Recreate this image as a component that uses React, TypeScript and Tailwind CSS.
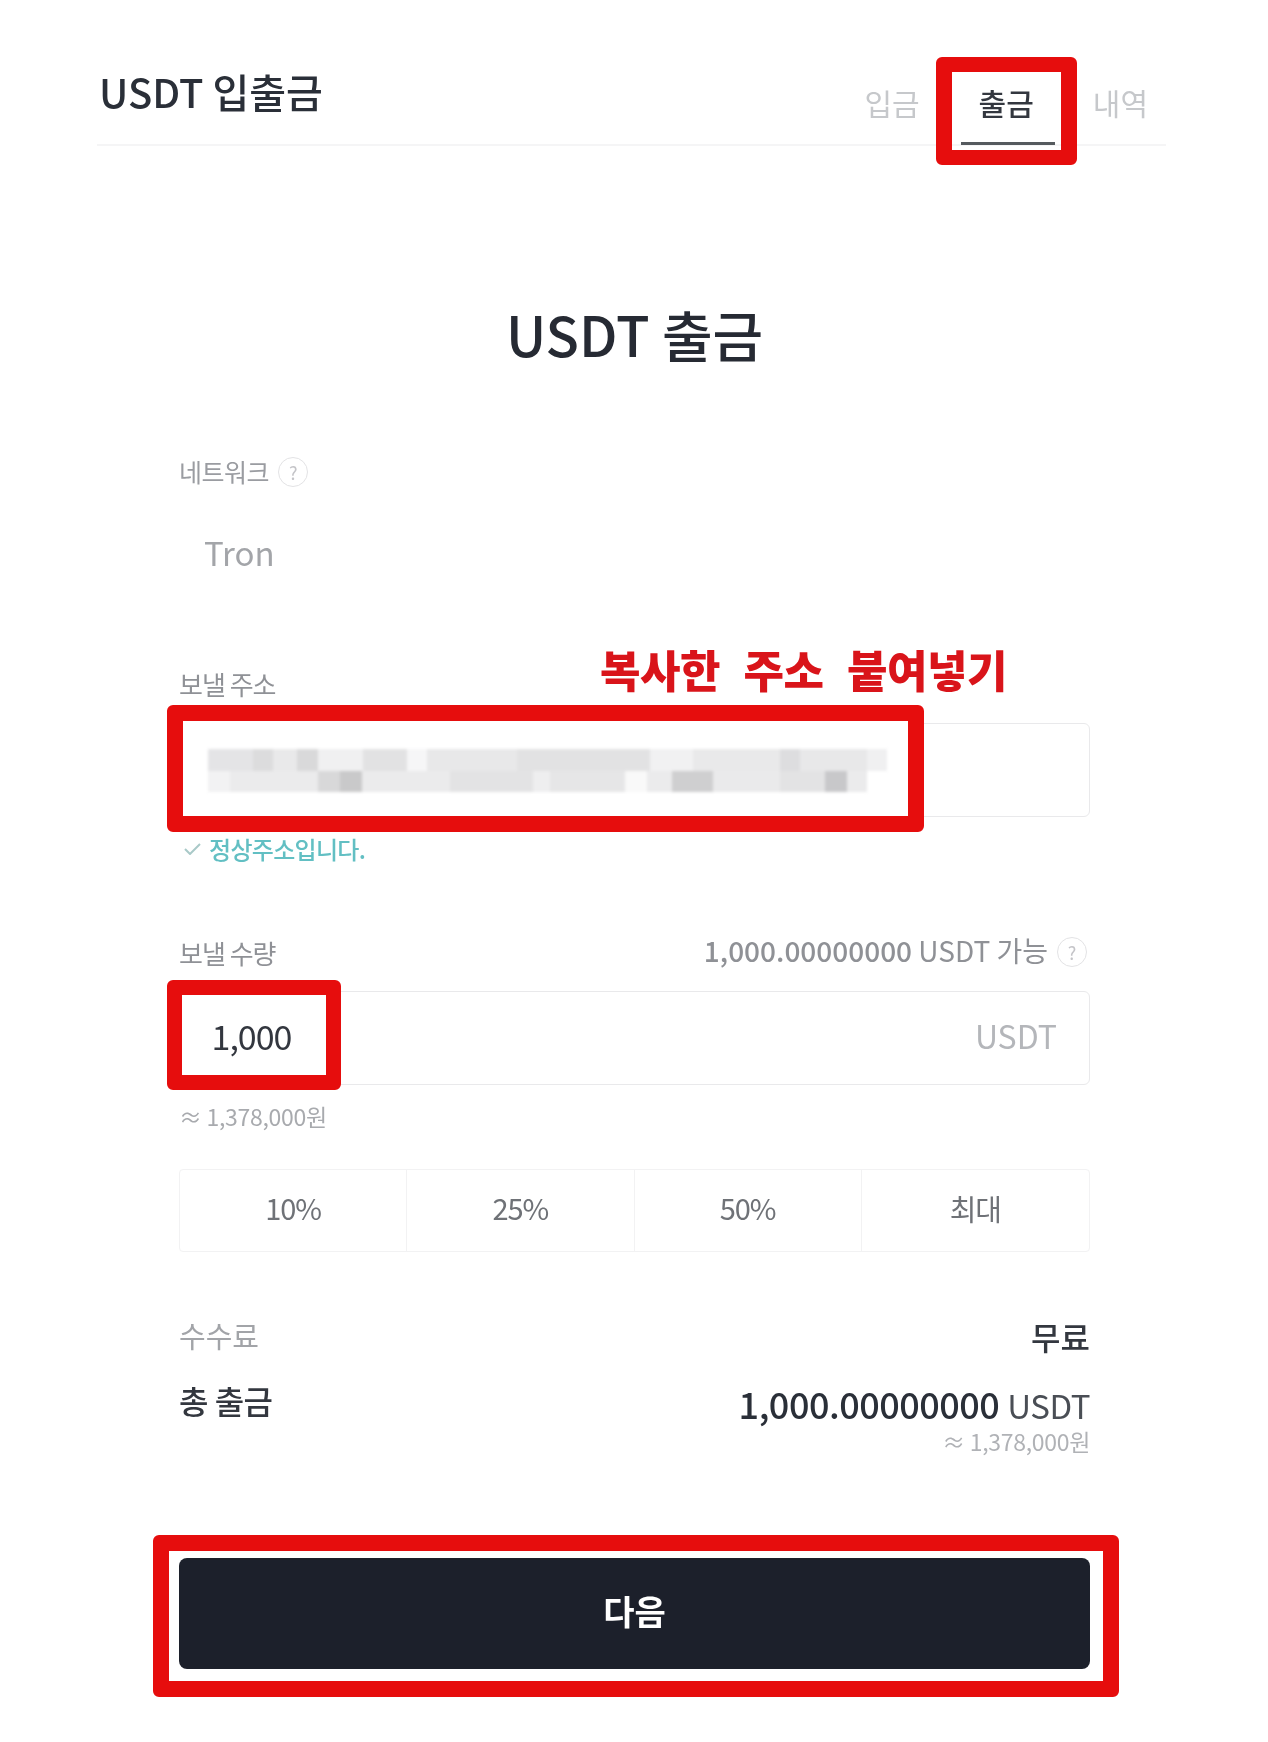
import React from 'react';

const font = { fontFamily: '"Noto Sans CJK KR", "Noto Sans", sans-serif' };

// mosaic of the hidden address: [x, width, colour], two rows
const mosaicTop: [number, number, string][] = [
  [208, 45, '#e4e4e6'], [253, 20, '#dcdcdd'], [273, 24, '#e9e9ea'], [297, 21, '#d9d9da'],
  [318, 45, '#f0f0f1'], [363, 44, '#e2e2e3'], [407, 20, '#f6f6f7'], [427, 90, '#e8e8e9'],
  [517, 133, '#e2e2e3'], [650, 43, '#f1f1f2'], [693, 87, '#e9e9ea'], [780, 20, '#dddddf'],
  [800, 67, '#e8e8e9'], [867, 20, '#f0f0f1'],
];
const mosaicBottom: [number, number, string][] = [
  [208, 22, '#f2f2f3'], [230, 88, '#ebebec'], [318, 22, '#d8d8d9'], [340, 22, '#c9c9ca'],
  [362, 88, '#ebebec'], [450, 83, '#e3e3e4'], [533, 17, '#eeeeef'], [550, 75, '#e6e6e7'],
  [625, 22, '#f9f9f9'], [647, 25, '#ebebec'], [672, 41, '#cfcfd0'], [713, 67, '#eaeaeb'],
  [780, 45, '#e3e3e4'], [825, 22, '#c8c8ca'], [847, 20, '#ebebec'],
];

function Help({ className }: { className: string }) {
  return (
    <span className={`flex h-[30px] w-[30px] items-center justify-center rounded-full border border-[#e3e3e5] text-[18px] text-[#c4c4c8] ${className}`}>
      ?
    </span>
  );
}

export default function App() {
  return (
    <div style={font} className="relative min-h-[1742px] w-[1268px] overflow-hidden bg-white blur-[0.7px]">
      <div className="ml-[97px] w-[1069px]">
        {/* Header */}
        <div className="flex h-[146px] items-start justify-between border-b-2 border-[#f5f5f6]">
          <h1 className="mt-[69px] ml-[2px] text-[40px] leading-[44px] font-medium text-[#2a2f38]">USDT 입출금</h1>
          <div className="mt-[85px] mr-[18px] flex gap-[59px] text-[30px] leading-[34px] text-[#c6c8cb]">
            <span>입금</span>
            <span className="font-medium text-[#33373f]">출금</span>
            <span>내역</span>
          </div>
        </div>

        <div className="ml-[82px] w-[911px]">
          <h2 className="mt-[162px] text-center text-[55px] leading-[50px] font-medium text-[#262a33]">USDT 출금</h2>

          <div className="mt-[99px] flex h-[30px] items-center gap-[9px] text-[25px] tracking-[-0.5px] text-[#9a9ca1]">
            <span>네트워크</span>
            <Help className="" />
          </div>
          <div className="mt-[50px] ml-[25px] h-[30px] text-[33px] leading-[30px] text-[#a3a5a9]">Tron</div>

          <div className="mt-[105px] h-[24px] text-[26px] leading-[24px] tracking-[-1px] text-[#8f9196]">보낼 주소</div>
          <div className="mt-[27px] h-[94px] rounded-[6px] border border-[#e9e9eb]" />
          <div className="mt-[22px] flex h-[20px] items-center gap-[8px] pl-[5px] text-[24px] leading-[20px] tracking-[-0.7px] text-[#62bfc3]">
            <svg width="17" height="12" viewBox="0 0 17 12" fill="none" stroke="#a9c9c8" strokeWidth="2">
              <path d="M1 6l5 5L16 1" />
            </svg>
            <span className="font-medium">정상주소입니다.</span>
          </div>

          <div className="mt-[78px] flex h-[30px] items-center justify-between text-[#8f9196]">
            <span className="text-[26px] tracking-[-1px]">보낼 수량</span>
            <div className="flex items-center gap-[9px] text-[28px]">
              <span className="-mt-[4px]">
                <span className="font-medium">1,000.00000000</span> USDT 가능
              </span>
              <Help className="mr-[3px]" />
            </div>
          </div>
          <div className="mt-[24px] flex h-[94px] items-center justify-end rounded-[6px] border border-[#e9e9eb] pr-[32px] text-[32px] text-[#b4b6ba]">
            <span className="-mt-[6px]">USDT</span>
          </div>
          <div className="mt-[20px] h-[22px] text-[23px] leading-[22px] tracking-[-0.3px] text-[#a8aaae]">≈ 1,378,000원</div>

          <div className="mt-[42px] grid h-[83px] grid-cols-4 rounded-[4px] border border-[#f2f2f3] text-[29px] tracking-[-1px] text-[#6f7277]">
            <div className="flex items-center justify-center border-r border-[#f2f2f3]"><span className="-mt-[6px]">10%</span></div>
            <div className="flex items-center justify-center border-r border-[#f2f2f3]"><span className="-mt-[6px]">25%</span></div>
            <div className="flex items-center justify-center border-r border-[#f2f2f3]"><span className="-mt-[6px]">50%</span></div>
            <div className="flex items-center justify-center"><span className="-mt-[4px]">최대</span></div>
          </div>

          <div className="mt-[71px] flex h-[26px] items-center justify-between">
            <span className="text-[29px] text-[#a2a4a8]">수수료</span>
            <span className="text-[32px] font-medium text-[#33373f]">무료</span>
          </div>
          <div className="mt-[40px] flex h-[31px] items-center justify-between">
            <span className="-mt-[10px] text-[32px] leading-[36px] font-medium tracking-[-0.5px] text-[#33373f]">총 출금</span>
            <div className="flex items-baseline gap-[8px] leading-[31px] tracking-[-0.5px] text-[#2a2f38]">
              <span className="text-[36px] font-medium">1,000.00000000</span>
              <span className="text-[33px] text-[#4a4e55]">USDT</span>
            </div>
          </div>
          <div className="mt-[11px] h-[20px] text-right text-[23px] leading-[20px] tracking-[-0.3px] text-[#b0b2b6]">≈ 1,378,000원</div>

          <button className="mt-[107px] flex h-[111px] w-full items-center justify-center rounded-[8px] bg-[#1c202b] text-[34px] font-bold text-white">
            <span className="-mt-[6px]">다음</span>
          </button>
        </div>
      </div>

      {/* Red annotations drawn over the page */}
      <div className="absolute top-[57px] left-[936px] h-[108px] w-[141px] rounded-[6px] border-x-[16px] border-y-[15px] border-[#e60d0d]">
        <div className="absolute top-[70px] left-[9px] h-[3px] w-[94px] bg-[#555a5e]" />
      </div>
      <div className="absolute top-[647px] left-[600px] text-[44px] leading-[44px] font-black tracking-[-0.5px] [word-spacing:14px] text-[#d9141a]">
        복사한 주소 붙여넣기
      </div>
      <div className="absolute top-[705px] left-[167px] h-[127px] w-[757px] rounded-[6px] border-[16px] border-[#e60d0d] bg-white">
        <svg className="absolute top-[28px] left-[25px] blur-[1.5px]" width="690" height="43" viewBox="208 749 690 43">
          {mosaicTop.map(([x, w, c]) => (
            <rect key={x} x={x} y={749} width={w} height={22} fill={c} />
          ))}
          {mosaicBottom.map(([x, w, c]) => (
            <rect key={x} x={x} y={771} width={w} height={21} fill={c} />
          ))}
        </svg>
      </div>
      <div className="absolute top-[980px] left-[167px] flex h-[110px] w-[174px] items-center justify-center rounded-[6px] border-[15px] border-[#e60d0d] bg-white pr-[5px] text-[34px] tracking-[-1px] text-[#33373f]">
        1,000
      </div>
      <div className="absolute top-[1535px] left-[153px] h-[162px] w-[966px] rounded-[6px] border-[16px] border-[#e60d0d]" />
    </div>
  );
}
